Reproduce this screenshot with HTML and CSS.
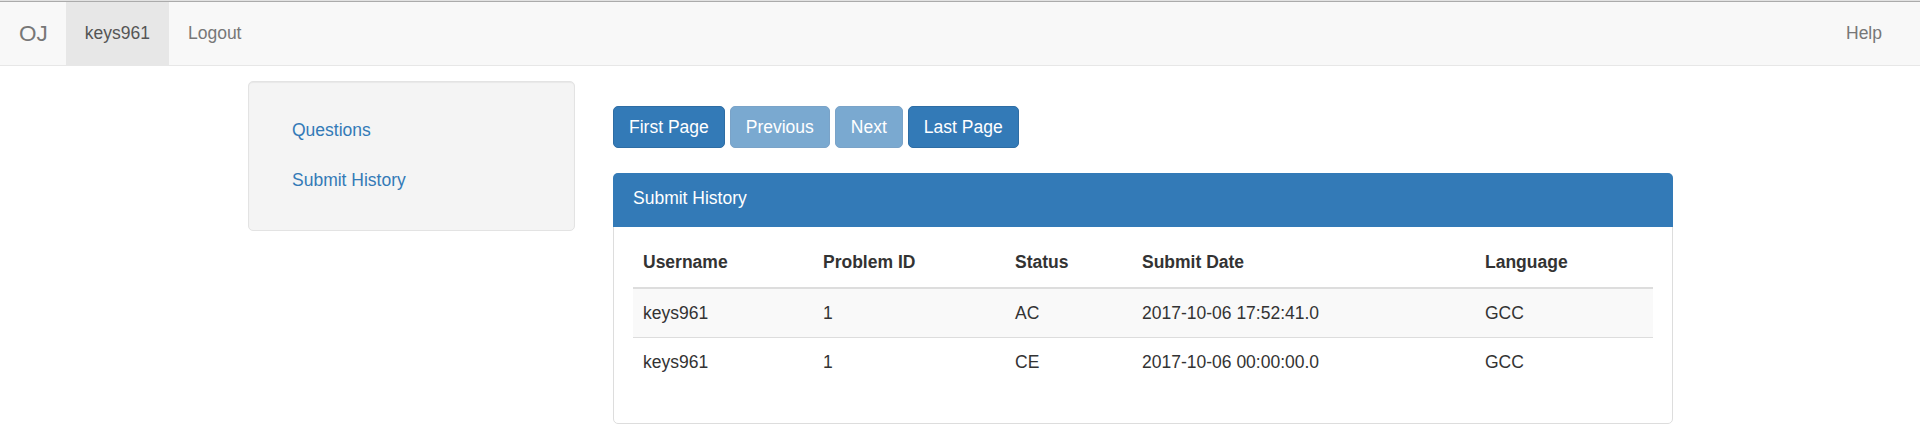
FILE: index.html
```html
<!DOCTYPE html>
<html lang="en">
<head>
<meta charset="utf-8">
<title>OJ - Submit History</title>
<link rel="stylesheet" href="styles.css">
</head>
<body>
<nav class="navbar">
  <div class="nav-left">
    <a class="brand" href="#">OJ</a>
    <a class="nav-link active" href="#">keys961</a>
    <a class="nav-link" href="#">Logout</a>
  </div>
  <div class="nav-right">
    <a class="nav-link" href="#">Help</a>
  </div>
</nav>
<div class="container">
  <aside class="side-col">
    <div class="well">
      <ul class="side-nav">
        <li><a href="#">Questions</a></li>
        <li><a href="#">Submit History</a></li>
      </ul>
    </div>
  </aside>
  <main class="main-col">
    <div class="pager">
      <a class="btn" href="#">First Page</a>
      <a class="btn disabled" href="#">Previous</a>
      <a class="btn disabled" href="#">Next</a>
      <a class="btn" href="#">Last Page</a>
    </div>
    <div class="panel">
      <div class="panel-heading">Submit History</div>
      <div class="panel-body">
        <table class="table">
          <thead>
            <tr>
              <th class="c-user">Username</th>
              <th class="c-pid">Problem ID</th>
              <th class="c-status">Status</th>
              <th class="c-date">Submit Date</th>
              <th class="c-lang">Language</th>
            </tr>
          </thead>
          <tbody>
            <tr class="striped">
              <td>keys961</td>
              <td>1</td>
              <td>AC</td>
              <td>2017-10-06 17:52:41.0</td>
              <td>GCC</td>
            </tr>
            <tr>
              <td>keys961</td>
              <td>1</td>
              <td>CE</td>
              <td>2017-10-06 00:00:00.0</td>
              <td>GCC</td>
            </tr>
          </tbody>
        </table>
      </div>
    </div>
  </main>
</div>
</body>
</html>
```

FILE: styles.css
```css
* { box-sizing: border-box; }

html, body {
  margin: 0;
  padding: 0;
  background: #fff;
}

body {
  font-family: "Liberation Sans", Arial, sans-serif;
  font-size: 17.5px;
  line-height: 25px;
  color: #333;
  border-top: 1px solid #e2e2e2;
}

a { text-decoration: none; }

/* Navbar */
.navbar {
  display: flex;
  justify-content: space-between;
  background: #f8f8f8;
  border-top: 1px solid #ababab;
  border-bottom: 1px solid #e7e7e7;
  height: 65px;
  padding-right: 19px;
}

.nav-left, .nav-right { display: flex; }

.brand {
  display: block;
  height: 63px;
  padding: 19px 18px 0 19px;
  font-size: 22.5px;
  line-height: 25px;
  color: #777;
}

.nav-link {
  display: block;
  height: 63px;
  padding: 19px 19px 0 19px;
  color: #777;
}

.nav-link.active {
  background: #e7e7e7;
  color: #555;
}

/* Layout */
.container {
  width: 1464px;
  margin: 15px auto 0;
  display: flex;
}

.side-col {
  width: 366px;
  padding: 0 19px 0 20px;
  flex: none;
}

.main-col {
  width: 1098px;
  padding: 0 19px;
  flex: none;
}

/* Well */
.well {
  background: #f4f4f4;
  border: 1px solid #e3e3e3;
  border-radius: 5px;
  box-shadow: inset 0 1px 1px rgba(0, 0, 0, 0.05);
  padding: 24px 24px 24px;
}

.side-nav {
  list-style: none;
  margin: 0;
  padding: 0;
}

.side-nav li a {
  display: block;
  padding: 12px 19px 13px;
  color: #337ab7;
}

/* Pager buttons */
.pager {
  display: flex;
  gap: 5px;
  margin-top: 25px;
}

.btn {
  display: block;
  height: 42px;
  line-height: 40px;
  padding: 0 15px;
  border: 1px solid #2e6da4;
  border-radius: 5px;
  background: #337ab7;
  color: #fff;
}

.btn.disabled {
  background: #7aa9d0;
  border-color: #7aa3c8;
}

/* Panel */
.panel {
  margin-top: 25px;
  border: 1px solid #ddd;
  border-radius: 5px;
  background: #fff;
}

.panel-heading {
  margin: -1px -1px 0;
  height: 54px;
  padding: 13px 20px 0;
  background: #337ab7;
  color: #fff;
  border-radius: 5px 5px 0 0;
}

.panel-body {
  padding: 12px 19px 12px;
}

.table {
  width: 100%;
  border-collapse: collapse;
  table-layout: fixed;
  margin-bottom: 25px;
}

.table th, .table td {
  text-align: left;
  padding: 12px 10px 11px;
  line-height: 25px;
  vertical-align: top;
}

.table th {
  font-weight: bold;
  padding-top: 11px;
  padding-bottom: 12px;
  border-bottom: 2px solid #ddd;
}

.table td {
  border-top: 1px solid #ddd;
}

.table tr.striped td { background: #f9f9f9; }

.c-user { width: 180px; }
.c-pid { width: 192px; }
.c-status { width: 127px; }
.c-date { width: 343px; }
.c-lang { width: 178px; }
```
